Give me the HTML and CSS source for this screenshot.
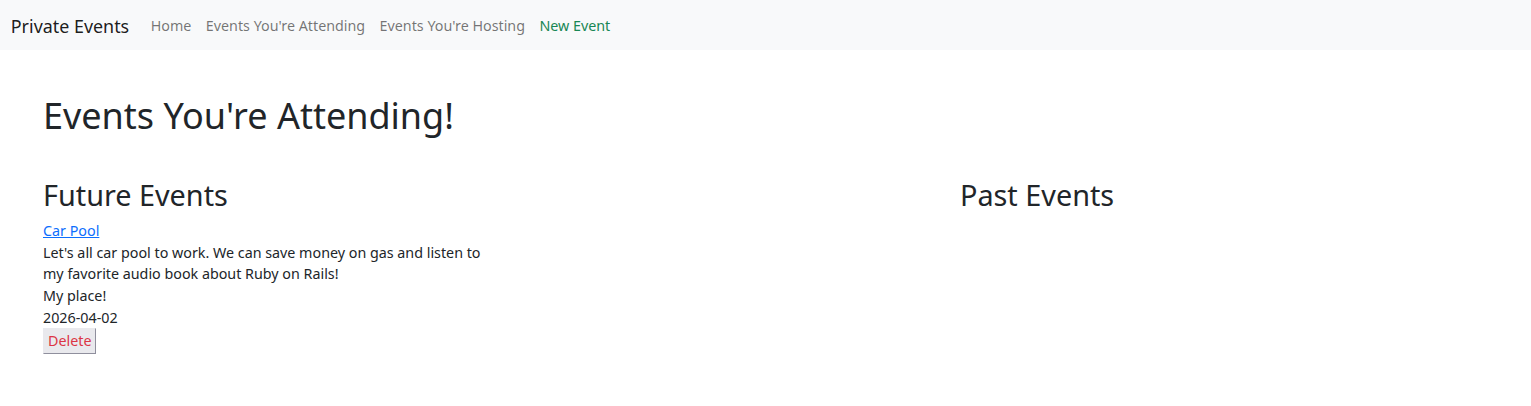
FILE: index.html
```html
<!DOCTYPE html>
<html lang="en">
<head>
<meta charset="utf-8">
<title>Private Events</title>
<link rel="stylesheet" href="styles.css">
</head>
<body>
<nav class="navbar">
  <a class="brand" href="#">Private Events</a>
  <ul class="nav">
    <li><a class="nav-link" href="#">Home</a></li>
    <li><a class="nav-link" href="#">Events You're Attending</a></li>
    <li><a class="nav-link" href="#">Events You're Hosting</a></li>
    <li><a class="nav-link success" href="#">New Event</a></li>
  </ul>
</nav>
<main class="page">
  <h1 class="title">Events You're Attending!</h1>
  <div class="columns">
    <section class="col">
      <h2 class="col-title">Future Events</h2>
      <div class="event">
        <a class="event-link" href="#">Car Pool</a>
        <p class="event-desc">Let's all car pool to work. We can save money on gas and listen to my favorite audio book about Ruby on Rails!</p>
        <p class="event-line">My place!</p>
        <p class="event-line">2026-04-02</p>
        <form class="event-form"><button type="button" class="btn-delete">Delete</button></form>
      </div>
    </section>
    <section class="col">
      <h2 class="col-title">Past Events</h2>
    </section>
  </div>
</main>
</body>
</html>
```
FILE: styles.css
```css
* { box-sizing: border-box; }
html, body { margin: 0; padding: 0; }
body {
  font-family: "Noto Sans", "Liberation Sans", sans-serif;
  font-size: 14.3px;
  line-height: 21.6px;
  color: #212529;
  background: #fff;
}
.navbar {
  display: flex;
  align-items: center;
  background: #f8f9fa;
  height: 50px;
  padding: 2px 10.8px 0;
}
.brand {
  font-size: 17.9px;
  line-height: 27px;
  color: rgba(0,0,0,.9);
  text-decoration: none;
  margin-right: 14.4px;
}
.nav {
  display: flex;
  list-style: none;
  margin: 0;
  padding: 0;
}
.nav-link {
  display: block;
  padding: 7.2px;
  color: rgba(0,0,0,.55);
  text-decoration: none;
}
.nav-link.success { color: #198754; }
.page { padding: 0 43px; }
.title {
  font-size: 36px;
  font-weight: 400;
  line-height: 1.2;
  margin: 44px 0 0;
}
.columns {
  display: grid;
  grid-template-columns: 917px 1fr;
  margin-top: 41px;
}
.col-title {
  font-size: 28.8px;
  font-weight: 400;
  line-height: 1.2;
  margin: 0 0 7.5px;
}
.event-link { color: #0d6efd; text-decoration: underline; }
.event-desc { max-width: 450px; margin: 0; }
.event-line { margin: 0; }
.event-form { margin: 0; }
.btn-delete {
  font-family: inherit;
  font-size: inherit;
  line-height: inherit;
  margin: 0;
  padding: 1px 4px;
  border-radius: 0;
  border: 1px solid #e9e9ed;
  border-right-color: #8f8f9d;
  border-bottom-color: #8f8f9d;
  background: #e9e9ed;
  color: #dc3545;
}
```
